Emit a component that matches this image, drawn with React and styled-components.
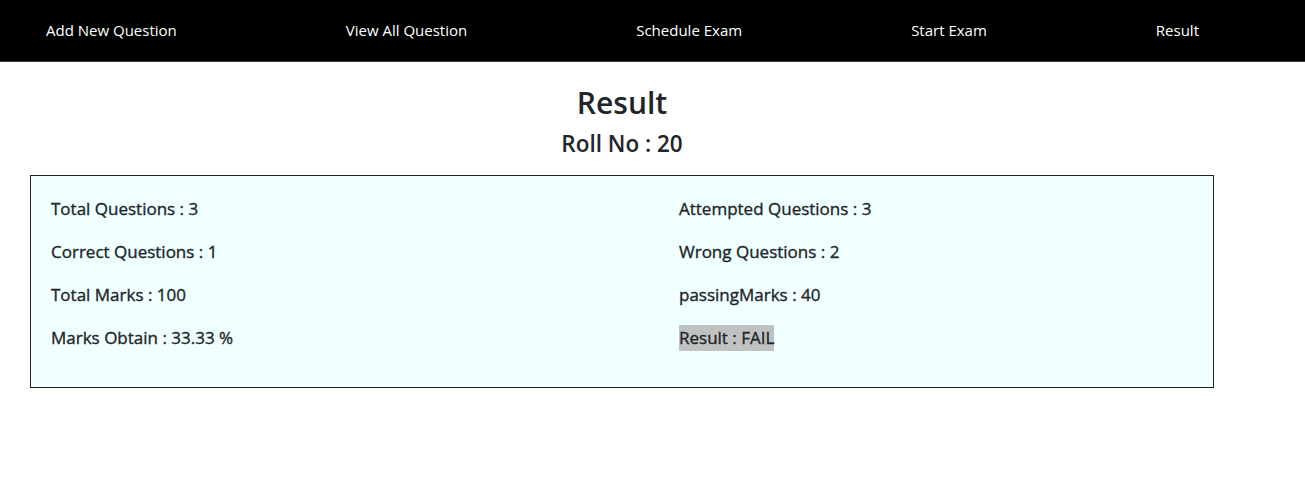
import React from 'react';
import styled, { createGlobalStyle } from 'styled-components';

const GlobalStyle = createGlobalStyle`
  body {
    margin: 0;
    background: #fff;
    font-family: 'Open Sans', 'Noto Sans', sans-serif;
    color: #212529;
  }
`;

const navItems = ['Add New Question', 'View All Question', 'Schedule Exam', 'Start Exam', 'Result'];

const stats = [
  ['Total Questions : 3', 'Attempted Questions : 3'],
  ['Correct Questions : 1', 'Wrong Questions : 2'],
  ['Total Marks : 100', 'passingMarks : 40'],
  ['Marks Obtain : 33.33 %', 'Result : FAIL'],
];

const App = () => (
  <>
    <GlobalStyle />
    <NavBar>
      {navItems.map((item) => (
        <NavLink key={item} href="#">{item}</NavLink>
      ))}
    </NavBar>
    <Main>
      <Title>Result</Title>
      <SubTitle>Roll No : 20</SubTitle>
      <Card>
        {stats.map(([left, right]) => (
          <React.Fragment key={left}>
            <Stat>{left}</Stat>
            <Stat>
              <StatText $highlight={right.startsWith('Result')}>{right}</StatText>
            </Stat>
          </React.Fragment>
        ))}
      </Card>
    </Main>
  </>
);

export default App;

const NavBar = styled.nav`
  display: flex;
  align-items: center;
  gap: 169px;
  height: 60px;
  padding: 0 0 1px 46px;
  background: #000;
  border-bottom: 1px solid #3a3a3a;
  box-sizing: content-box;
`;

const NavLink = styled.a`
  color: #fff;
  text-decoration: none;
  font-size: 15px;
  white-space: nowrap;
  &:hover {
    color: #ccc;
  }
`;

const Main = styled.main`
  width: 1184px;
  margin-left: 30px;
  display: flex;
  flex-direction: column;
  align-items: center;
`;

const Title = styled.h2`
  margin: 21px 0 0;
  font-size: 30px;
  font-weight: 600;
  line-height: 40px;
`;

const SubTitle = styled.h4`
  margin: 1px 0 11px;
  font-size: 22.5px;
  font-weight: 600;
  line-height: 40px;
`;

const Card = styled.div`
  align-self: stretch;
  display: grid;
  grid-template-columns: 628px 1fr;
  row-gap: 17px;
  padding: 20px 20px 36px;
  background: #f0ffff;
  border: 1px solid #222;
`;

const Stat = styled.div`
  font-size: 17px;
  font-weight: 400;
  line-height: 26px;
  -webkit-text-stroke: 0.35px #212529;
`;

const StatText = styled.span`
  display: inline-block;
  background: ${(p) => (p.$highlight ? '#c0c2c2' : 'transparent')};
`;
